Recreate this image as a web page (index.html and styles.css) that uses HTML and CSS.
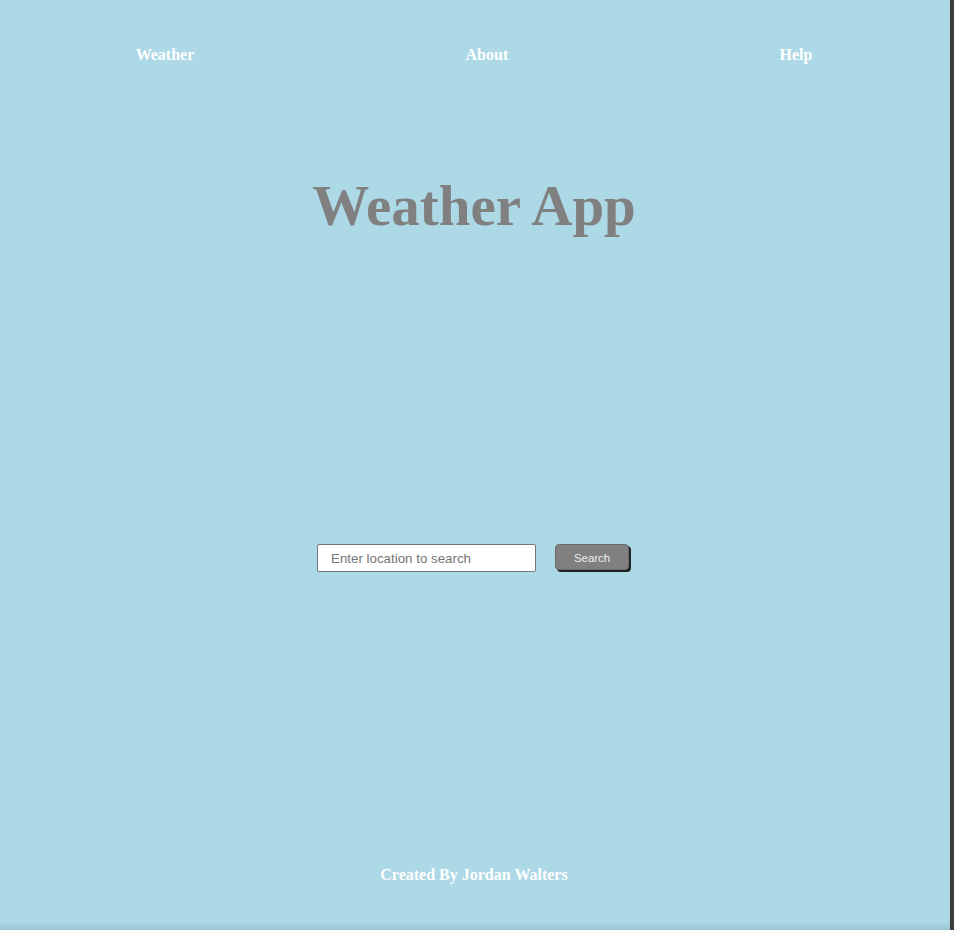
FILE: index.html
```html
<!DOCTYPE html>
<html lang="en">
<head>
<meta charset="utf-8">
<title>Weather App</title>
<link rel="stylesheet" href="styles.css">
</head>
<body>
<div class="page">
  <nav class="nav">
    <a class="nav-link" href="#">Weather</a>
    <a class="nav-link" href="#">About</a>
    <a class="nav-link" href="#">Help</a>
  </nav>
  <h1 class="title">Weather App</h1>
  <form class="search">
    <input class="search-input" type="text" placeholder="Enter location to search">
    <button class="search-button" type="button">Search</button>
  </form>
  <footer class="footer">Created By Jordan Walters</footer>
</div>
</body>
</html>
```

FILE: styles.css
```css
html {
  background: #3c3c3c;
}
body {
  margin: 0;
  font-family: "Liberation Serif", "Times New Roman", serif;
}
.page {
  box-sizing: border-box;
  width: 950px;
  height: 930px;
  padding-right: 2px;
  background: #add8e6;
  display: flex;
  flex-direction: column;
  box-shadow: inset 0 -7px 6px -4px rgba(0, 0, 0, 0.12);
}
.nav {
  display: flex;
  justify-content: space-around;
  padding-top: 46px;
  line-height: 18px;
}
.nav-link {
  color: #fff;
  font-weight: bold;
  font-size: 16px;
  text-decoration: none;
}
.title {
  margin: 113px 0 0;
  text-align: center;
  font-size: 57px;
  line-height: 57px;
  font-weight: bold;
  color: #808080;
}
.search {
  margin-top: 310px;
  display: flex;
  justify-content: center;
  align-items: flex-start;
  gap: 19px;
  padding-right: 2px;
}
.search-input {
  box-sizing: border-box;
  width: 219px;
  height: 28px;
  margin: 0;
  border: 1px solid #767676;
  border-radius: 2px;
  padding: 0 13px;
  font-family: "Liberation Sans", Arial, sans-serif;
  font-size: 13.33px;
  background: #fff;
}
.search-input::placeholder {
  color: #757575;
}
.search-button {
  box-sizing: border-box;
  width: 74px;
  height: 26px;
  margin: 0;
  padding: 2px 0 0;
  border: 1px solid #6a6a6a;
  border-radius: 4px;
  background: #808080;
  color: #f0f0f0;
  font-family: "Liberation Sans", Arial, sans-serif;
  font-size: 11.4px;
  box-shadow: 2px 2px 0.5px #222;
}
.footer {
  margin-top: 294px;
  text-align: center;
  color: #fff;
  font-weight: bold;
  font-size: 16px;
  line-height: 18px;
}
```
